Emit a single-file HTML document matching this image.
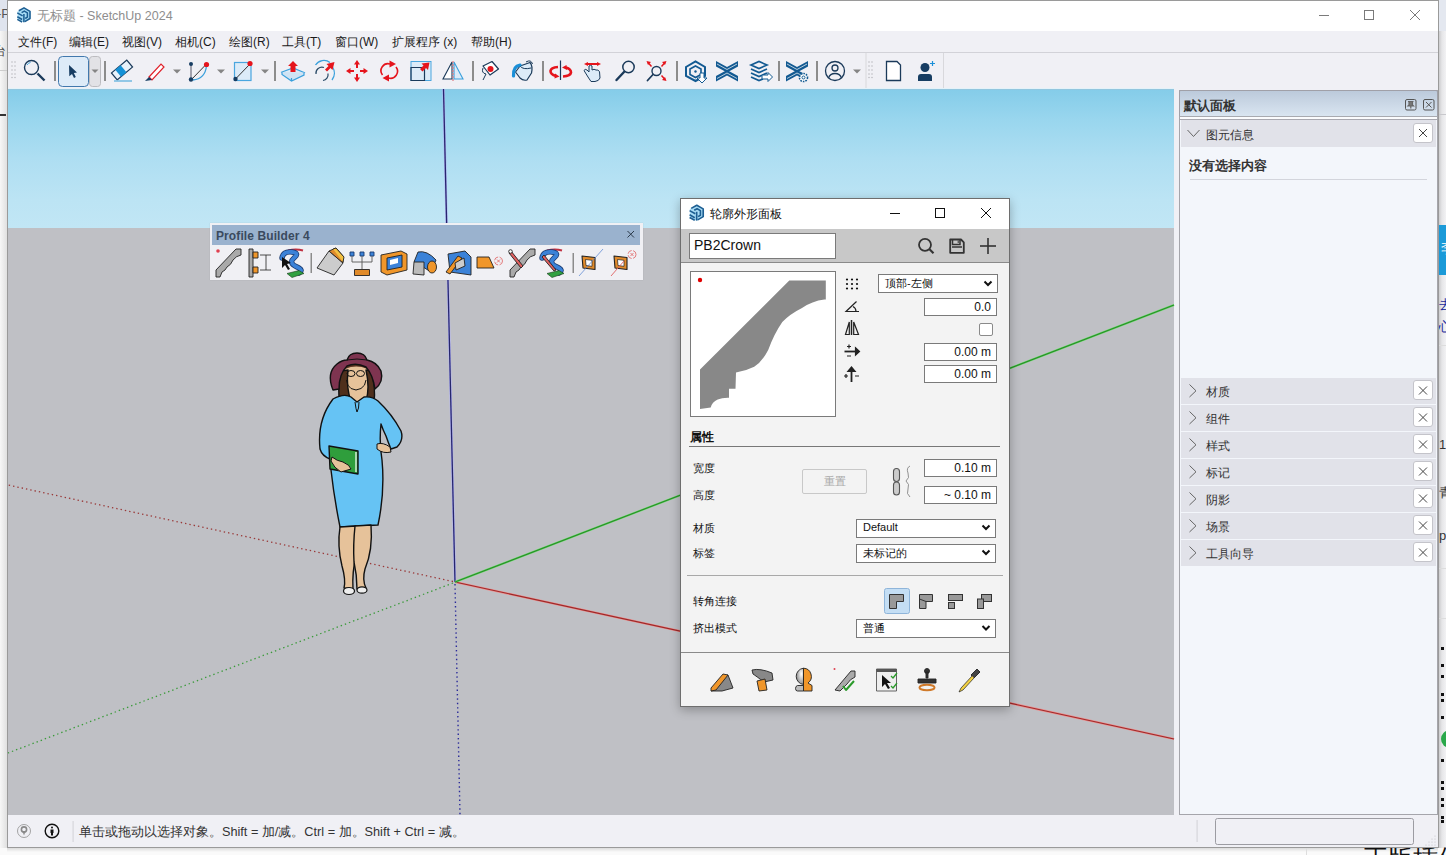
<!DOCTYPE html>
<html><head><meta charset="utf-8">
<style>
*{margin:0;padding:0;box-sizing:border-box}
html,body{width:1446px;height:855px;overflow:hidden;background:#f6f6f6;font-family:"Liberation Sans",sans-serif;position:relative}
.a{position:absolute}
svg{position:absolute;overflow:visible}
#win{left:7px;top:0;width:1432px;height:848px;border:1px solid #9a9a9a;background:#f0f0f5}
#title{left:8px;top:1px;width:1430px;height:30px;background:#fff}
#ttext{left:37px;top:8px;font-size:12.5px;color:#8e8e8e;white-space:nowrap}
#menu{left:8px;top:31px;width:1430px;height:21px;background:#f0f0f5}
.mi{position:absolute;top:34px;font-size:12px;color:#1a1a1a;white-space:nowrap}
#tbline{left:8px;top:52px;width:1430px;height:1px;background:#d2d2d8}
#tb{left:8px;top:53px;width:1430px;height:36px;background:#f0f0f5}
#sky{left:8px;top:89px;width:1166px;height:139px;background:linear-gradient(#84cce9 0%,#99d6ee 22%,#aedef2 50%,#bce4f4 80%,#c1e6f5 100%)}
#ground{left:8px;top:228px;width:1166px;height:587px;background:#bfc0c5}
#status{left:8px;top:815px;width:1430px;height:32px;background:#f0f0f5}
#panel{left:1179px;top:90px;width:259px;height:725px;background:#f3f6fb;border:1px solid #a5a5ab}
.dt{font-size:11px;color:#111;white-space:nowrap}
.inp{background:#fff;border:1px solid #7a7a7a;font-size:12px;color:#111;text-align:right;padding-right:5px;line-height:16px}
.prow{left:1181px;width:255px;height:26px;background:#e1e2e9}
.ptxt{left:1206px;font-size:12px;color:#333;white-space:nowrap}
.pbtn{left:1413px;width:20px;height:20px;background:#fff;border:1px solid #c4c4ca;border-radius:3px}
</style></head><body>
<div class="a" style="left:0;top:31px;width:7px;height:817px;background:linear-gradient(to right,#f7f7f7,#e0e0e0)"></div>
<div class="a" style="left:0;top:0;width:7px;height:31px;background:#dfe4ee"></div>
<div class="a" style="left:-3px;top:6px;font-size:13px;color:#555;white-space:nowrap">-P</div>
<div class="a" style="left:-6px;top:43px;font-size:12px;color:#444;white-space:nowrap">台</div>
<div class="a" style="left:0;top:70px;width:7px;height:1px;background:#ccc"></div>
<div class="a" style="left:0;top:114px;width:6px;height:2px;background:#333"></div>
<div class="a" style="left:1438px;top:0;width:8px;height:855px;background:linear-gradient(to right,#c4c4c6,#e6e6e8 50%,#f2f2f4)"></div>
<div class="a" style="left:1439px;top:0;width:7px;height:31px;background:#e4e8f0"></div>
<div class="a" style="left:1439px;top:114px;width:7px;height:1px;background:#c8c8cc"></div>
<div class="a" style="left:1439px;top:225px;width:7px;height:50px;background:#1b9ad8"></div>
<div class="a" style="left:1441px;top:240px;font-size:14px;color:#fff;white-space:nowrap">李</div>
<div class="a" style="left:1439px;top:296px;font-size:13px;color:#1a2a9a;white-space:nowrap">去</div>
<div class="a" style="left:1438px;top:318px;font-size:13px;color:#1a2a9a;white-space:nowrap">心</div>
<div class="a" style="left:1439px;top:345px;width:7px;height:1px;background:#ddd"></div>
<div class="a" style="left:1439px;top:437px;font-size:13px;color:#333;white-space:nowrap">1</div>
<div class="a" style="left:1439px;top:484px;font-size:13px;color:#333;white-space:nowrap">青</div>
<div class="a" style="left:1439px;top:528px;font-size:13px;color:#333;white-space:nowrap">p</div>
<div class="a" style="left:1439px;top:568px;width:7px;height:1px;background:#ddd"></div>
<div class="a" style="left:1439px;top:618px;width:7px;height:1px;background:#ddd"></div>
<svg style="left:1438px;top:640px" width="8" height="215" viewBox="1438 640 8 215">
 <g fill="#111"><rect x="1441" y="647" width="3" height="3"/><rect x="1441" y="664" width="3" height="3"/><rect x="1441" y="675" width="3" height="3"/><rect x="1441" y="693" width="3" height="3"/><rect x="1441" y="699" width="3" height="3"/><rect x="1441" y="716" width="3" height="3"/><rect x="1441" y="759" width="3" height="3"/><rect x="1441" y="781" width="3" height="3"/><rect x="1441" y="787" width="3" height="3"/><rect x="1441" y="798" width="3" height="3"/><rect x="1441" y="804" width="3" height="3"/><rect x="1441" y="816" width="3" height="3"/><rect x="1441" y="820" width="3" height="3"/></g>
 <circle cx="1450" cy="739" r="9" fill="#2aa84a"/>
</svg>
<div class="a" style="left:0;top:848px;width:1446px;height:7px;background:#fafafa"></div>
<div class="a" style="left:7px;top:848px;width:1431px;height:4px;background:linear-gradient(rgba(0,0,0,.12),rgba(0,0,0,0))"></div>
<div class="a" style="left:1306px;top:848px;width:1px;height:7px;background:#ddd"></div>
<div class="a" style="left:1363px;top:844px;font-size:25px;color:#111;white-space:nowrap;line-height:28px">正版插件</div>

<div class="a" id="win"></div>
<div class="a" id="title"></div>
<svg style="left:0;top:0" width="40" height="30" viewBox="0 0 40 30">
 <g id="sulogo">
 <path d="M17.5 11.5 L24 7.7 L30.5 11.3 L30.5 18.6 L24 22.3 L17.5 19 Z" fill="#a8dcf5"/>
 <g stroke="#1d5e92" stroke-width="1.55" fill="none" stroke-linejoin="round">
  <path d="M18.8 10.8 L24 7.9 L30 11.3 L30 18.5 L24.8 21.6"/>
  <path d="M21.6 12.6 L24.3 11.1 L27.4 12.9 L27.4 17.2 L25.2 18.5"/>
  <path d="M23.9 14 L23.9 22.2"/>
  <path d="M17.3 12.9 L22.6 15.9"/>
  <path d="M17.3 16.8 L22.1 19.5"/>
  <path d="M17.3 19.4 L22.1 22"/>
 </g>
 </g>
</svg>
<div class="a" id="ttext">无标题 - SketchUp 2024</div>
<svg style="left:1310px;top:0" width="120" height="30" viewBox="1310 0 120 30">
 <g stroke="#7a7a7a" stroke-width="1" fill="none">
  <line x1="1319" y1="15.5" x2="1329" y2="15.5"/>
  <rect x="1364.5" y="10.5" width="9" height="9"/>
  <line x1="1410" y1="10" x2="1420" y2="20"/><line x1="1420" y1="10" x2="1410" y2="20"/>
 </g>
</svg>
<div class="a" id="menu"></div>
<div class="mi" style="left:18px">文件(F)</div>
<div class="mi" style="left:69px">编辑(E)</div>
<div class="mi" style="left:122px">视图(V)</div>
<div class="mi" style="left:175px">相机(C)</div>
<div class="mi" style="left:229px">绘图(R)</div>
<div class="mi" style="left:282px">工具(T)</div>
<div class="mi" style="left:335px">窗口(W)</div>
<div class="mi" style="left:392px">扩展程序 (x)</div>
<div class="mi" style="left:471px">帮助(H)</div>
<div class="a" id="tbline"></div>
<div class="a" id="tb"></div>
<svg style="left:0;top:52px" width="960" height="37" viewBox="0 52 960 37">
 <g fill="#bcbcc2"><circle cx="12" cy="62" r=".8"/><circle cx="15" cy="62" r=".8"/><circle cx="12" cy="66" r=".8"/><circle cx="15" cy="66" r=".8"/><circle cx="12" cy="70" r=".8"/><circle cx="15" cy="70" r=".8"/><circle cx="12" cy="74" r=".8"/><circle cx="15" cy="74" r=".8"/><circle cx="12" cy="77.5" r=".8"/><circle cx="15" cy="77.5" r=".8"/></g>
 <!-- search -->
 <circle cx="31.5" cy="67.5" r="7" fill="none" stroke="#1b3a5a" stroke-width="1.4"/>
 <path d="M27 65 A5 5 0 0 1 30.5 62.5" stroke="#3fa4e0" stroke-width="1" fill="none"/>
 <line x1="37.5" y1="73.5" x2="44.5" y2="80.5" stroke="#1b3a5a" stroke-width="2.4"/>
 <g fill="#8c8c8c"><rect x="54" y="61" width="2" height="20"/><rect x="104" y="61" width="2" height="20"/><rect x="274" y="61" width="2" height="20"/><rect x="472" y="61" width="2" height="20"/><rect x="542" y="61" width="2" height="20"/><rect x="676" y="61" width="2" height="20"/><rect x="778" y="61" width="2" height="20"/><rect x="816" y="61" width="2" height="20"/></g>
 <!-- select -->
 <rect x="58.5" y="56.5" width="30" height="30" rx="4" fill="#ddebf8" stroke="#4178ad" stroke-width="1"/>
 <path d="M69 65 L77 72.5 L73.8 73 L75.8 77 L74 78 L72 74 L69.3 76.3 Z" fill="#173d62"/>
 <rect x="89.5" y="56.5" width="11" height="30" rx="3" fill="#e2e2e6" stroke="#bcbcc0"/>
 <g fill="#858585"><path d="M91.5 69.5 L98.5 69.5 L95 73 Z"/><path d="M173 69.5 L181 69.5 L177 73.5 Z"/><path d="M217 69.5 L225 69.5 L221 73.5 Z"/><path d="M261 69.5 L269 69.5 L265 73.5 Z"/><path d="M853 69.5 L861 69.5 L857 73.5 Z"/></g>
 <!-- eraser -->
 <g transform="rotate(-40 122 70)"><rect x="112" y="65.5" width="20" height="9" fill="#e8f2fb" stroke="#1b3a5a" stroke-width="1.2"/><rect x="117" y="65.5" width="7" height="9" fill="#1591d6"/></g>
 <line x1="114" y1="81" x2="132" y2="81" stroke="#7bbde3" stroke-width="1.6"/>
 <!-- pencil -->
 <path d="M149 77 L161 64 L164 67 L152 80 Z" fill="#fff" stroke="#e0202a" stroke-width="1.2"/>
 <path d="M145 81 L149 77 L152 80 Z" fill="#173d62"/>
 <!-- arc -->
 <line x1="191" y1="64" x2="191" y2="80" stroke="#556" stroke-width="1"/>
 <line x1="191" y1="80" x2="206" y2="64.5" stroke="#333" stroke-width="1"/>
 <path d="M193 80 Q205 79 206.5 66" stroke="#3aa0dc" stroke-width="1.3" fill="none"/>
 <circle cx="191" cy="64" r="2" fill="#173d62"/><circle cx="191" cy="79.5" r="2.2" fill="#173d62"/><circle cx="206.5" cy="64.5" r="2.6" fill="#e5141c"/>
 <!-- rect -->
 <rect x="234.5" y="62.5" width="16.5" height="18" fill="#dcebf8" stroke="#4aa6df" stroke-width="1.2"/>
 <line x1="235.5" y1="79" x2="250" y2="64" stroke="#333" stroke-width="1"/>
 <circle cx="235.5" cy="79" r="2.2" fill="#173d62"/><circle cx="250" cy="63.5" r="2.6" fill="#e5141c"/>
 <!-- push pull -->
 <path d="M282 72 L293 68 L304 72.5 L293 77.5 Z" fill="#dcebf8" stroke="#3aa0dc" stroke-width="1.2"/>
 <path d="M282 72 L282 74.5 L291.5 81 L304 75 L304 72.5 M291.5 81 L291.5 78" fill="#cfe3f4" stroke="#3aa0dc" stroke-width="1.2"/>
 <path d="M293 61 L298 66 L295.5 66 L295.5 72 L290.5 72 L290.5 66 L288 66 Z" fill="#e5141c"/>
 <!-- follow me -->
 <path d="M315.5 65 A10 10 0 0 1 330 62.5" stroke="#3aa0dc" stroke-width="1.3" fill="none"/>
 <path d="M332.5 67 A11 11 0 0 1 332 80" stroke="#3aa0dc" stroke-width="1.3" fill="none"/>
 <path d="M316 74 A6 6 0 0 1 324 67.5" stroke="#294a66" stroke-width="1.2" fill="none"/>
 <path d="M328 73.5 A6 6 0 0 1 323 80.5" stroke="#294a66" stroke-width="1.2" fill="none"/>
 <path d="M334.5 62 L332.5 70 L330.5 68 L327 71.5 L325 69.5 L328.5 66 L326.5 64 Z" fill="#e5141c"/>
 <!-- move -->
 <g fill="#e5141c"><path d="M357 60 L360 64.5 L354 64.5 Z"/><path d="M357 82 L360 77.5 L354 77.5 Z"/><path d="M346 71 L350.5 68 L350.5 74 Z"/><path d="M368 71 L363.5 68 L363.5 74 Z"/><rect x="356" y="64" width="2" height="4"/><rect x="356" y="74" width="2" height="4"/><rect x="350" y="70" width="4" height="2"/><rect x="360" y="70" width="4" height="2"/></g>
 <!-- rotate -->
 <path d="M382.5 75 A7 7 0 0 1 390 64" stroke="#e5141c" stroke-width="1.6" fill="none"/>
 <path d="M396 67 A7 7 0 0 1 388.5 78" stroke="#e5141c" stroke-width="1.6" fill="none"/>
 <path d="M389.5 60.5 L396 64 L389.5 67.5 Z" fill="#e5141c"/><path d="M389 74.5 L389 81.5 L382.5 78 Z" fill="#e5141c"/>
 <!-- scale -->
 <rect x="411" y="61.5" width="20" height="19" fill="#dcebf8" stroke="#4aa6df" stroke-width="1"/>
 <path d="M411 67.5 L424.5 67.5 L424.5 80.5 L411 80.5 Z" fill="none" stroke="#1b3a5a" stroke-width="1.2"/>
 <path d="M429.5 62.5 L428 70 L426 68 L422.5 71.5 L420 69 L423.5 65.5 L421.5 63.5 Z" fill="#e5141c"/>
 <!-- flip -->
 <path d="M452 62 L452 79 L443 79 Z" fill="#fff" stroke="#1b3a5a" stroke-width="1.1"/>
 <path d="M454 62 L454 79 L463 79 Z" fill="#dcebf8" stroke="#3aa0dc" stroke-width="1.1"/>
 <line x1="453" y1="61" x2="453" y2="81" stroke="#e07a80" stroke-width="1.2" stroke-dasharray="2 1"/>
 <!-- tape -->
 <path d="M483 66 L492 61.5 L498.5 69 L490 75 Z" fill="#fff" stroke="#1b3a5a" stroke-width="1.2" stroke-linejoin="round"/>
 <circle cx="490.5" cy="69" r="3" fill="#e5141c"/>
 <path d="M483 68 Q481 73 486 74 L483 80" stroke="#1b3a5a" stroke-width="1" fill="none"/>
 <!-- paint -->
 <path d="M520 66 L530 62.5 Q533 66 531.5 73 L527 80 Q523 81 520 78 L515.5 72 Z" fill="#dcebf8" stroke="#1b3a5a" stroke-width="1.2" stroke-linejoin="round"/>
 <path d="M520 66 Q523 70 531 68" stroke="#1b3a5a" stroke-width="1" fill="none"/>
 <path d="M526 62 Q531 59 532.5 64" stroke="#1b3a5a" stroke-width="1" fill="none"/>
 <path d="M520 65 Q513 66 513.5 76" stroke="#1a8fd8" stroke-width="3.2" fill="none" stroke-linecap="round"/>
 <!-- orbit -->
 <line x1="560.5" y1="60.5" x2="560.5" y2="80" stroke="#1b3a5a" stroke-width="1.2"/>
 <path d="M558 67 Q551 67.5 550.5 71 Q550.5 74.5 556 76" stroke="#e5141c" stroke-width="2.6" fill="none"/>
 <path d="M563 76.5 Q570.5 76 571 72.5 Q571 69 566 67.5" stroke="#e5141c" stroke-width="2.6" fill="none"/>
 <path d="M555 73.5 L559.5 76.5 L554.5 78.5 Z M566.5 65 L562 67.5 L567 70 Z" fill="#e5141c"/>
 <!-- pan -->
 <path d="M588 77 L584 70.5 Q585 68.5 587 70 L589 72 L589 66 Q590.5 64.5 592 66 L592 70 Q594 68.5 596 70 Q598 69.5 599.5 71.5 L600 78 Q599 81 595 81.5 L591 81.5 Z" fill="#dcebf8" stroke="#1b3a5a" stroke-width="1"/>
 <path d="M584 64 L588 62 L588 66 Z M601 64 L597 62 L597 66 Z" fill="#e5141c"/><rect x="587" y="63" width="11" height="2" fill="#e5141c"/>
 <!-- zoom -->
 <circle cx="628.5" cy="67" r="5.7" fill="none" stroke="#1b3a5a" stroke-width="1.5"/>
 <line x1="624" y1="72" x2="616.5" y2="80" stroke="#1b3a5a" stroke-width="2.4" stroke-linecap="round"/>
 <!-- zoom ext -->
 <circle cx="656.5" cy="71" r="4.5" fill="none" stroke="#1b3a5a" stroke-width="1.4"/>
 <line x1="653" y1="74.5" x2="647.5" y2="80.5" stroke="#1b3a5a" stroke-width="1.8" stroke-linecap="round"/>
 <g fill="#e5141c"><path d="M646.5 61 L651 62 L648 65 Z"/><path d="M666.5 61 L662 62 L665 65 Z"/><path d="M666.5 81 L662 80 L665 77 Z"/><line x1="648" y1="62.5" x2="651.5" y2="66.5" stroke="#e5141c" stroke-width="1.5"/><line x1="665" y1="62.5" x2="661.5" y2="66.5" stroke="#e5141c" stroke-width="1.5"/><line x1="665" y1="79.5" x2="661.5" y2="75.5" stroke="#e5141c" stroke-width="1.5"/></g>
 <!-- warehouse icons -->
 <g stroke="#135a92" fill="none" stroke-width="2">
  <path d="M686 67 L695.5 61.5 L705 67 L705 76 L695.5 81 L686 76 Z"/>
  <path d="M690 69 L695.5 66 L701 69 L701 74.5 L695.5 77.5 L690 74.5 Z" stroke-width="1.6"/>
 </g>
 <circle cx="695.5" cy="71.5" r="1.2" fill="#135a92"/>
 <path d="M700 73 L704 73 L704 78 L707 78 L702 83 L697 78 L700 78 Z" fill="#fff" stroke="#135a92" stroke-width="1"/>
 <g fill="#135a92">
  <path d="M716 61 L727 67 L738 61 L738 66.5 L727 72.5 L716 66.5 Z"/>
  <path d="M716 81.5 L727 75.5 L738 81.5 L738 76 L727 70 L716 76 Z"/>
  <path d="M717 64 L727 69.5 L737 64 M717 78.5 L727 73 L737 78.5" stroke="#fff" stroke-width=".7" fill="none"/>
 </g>
 <g stroke="#135a92" fill="none" stroke-width="1.7">
  <path d="M751 65 L759 61.5 L767 65 L759 68.5 Z"/><path d="M751 69 L759 72.5 L767 69"/><path d="M751 73 L759 76.5 L767 73"/><path d="M751 77 L759 80.5 L763 79"/>
 </g>
 <path d="M762 75 L768 75 L768 72.5 L772.5 77 L768 81.5 L768 79 L762 79 Z" fill="#fff" stroke="#135a92" stroke-width="1"/>
 <g fill="#135a92">
  <path d="M786 61 L797 67 L808 61 L808 66.5 L797 72.5 L786 66.5 Z"/>
  <path d="M786 81.5 L797 75.5 L801 77.5 L803 73 L797 70 L786 76 Z"/>
  <path d="M787 64 L797 69.5 L807 64 M787 78.5 L797 73 L800 74.5" stroke="#fff" stroke-width=".7" fill="none"/>
 </g>
 <circle cx="803.5" cy="77.5" r="4" fill="#fff" stroke="#135a92" stroke-width="1.6" stroke-dasharray="1.6 1"/>
 <circle cx="803.5" cy="77.5" r="1.5" fill="none" stroke="#135a92" stroke-width="1"/>
 <!-- account -->
 <circle cx="835" cy="71" r="9.5" fill="none" stroke="#1b3a5a" stroke-width="1.3"/>
 <circle cx="835" cy="68" r="3" fill="none" stroke="#1b3a5a" stroke-width="1.3"/>
 <path d="M828.5 78 Q830 73.5 835 73.5 Q840 73.5 841.5 78" fill="none" stroke="#1b3a5a" stroke-width="1.3"/>
 <rect x="865.5" y="53" width="1" height="36" fill="#d8d8dc"/>
 <rect x="943" y="53" width="1" height="36" fill="#d8d8dc"/>
 <g fill="#bcbcc2"><circle cx="869" cy="62" r=".8"/><circle cx="872" cy="62" r=".8"/><circle cx="869" cy="66" r=".8"/><circle cx="872" cy="66" r=".8"/><circle cx="869" cy="70" r=".8"/><circle cx="872" cy="70" r=".8"/><circle cx="869" cy="74" r=".8"/><circle cx="872" cy="74" r=".8"/><circle cx="869" cy="77.5" r=".8"/><circle cx="872" cy="77.5" r=".8"/></g>
 <path d="M886.5 61.5 L897 61.5 L900.5 65 L900.5 80.5 L886.5 80.5 Z" fill="#fff" stroke="#1b3a5a" stroke-width="1.3"/>
 <circle cx="925" cy="67.5" r="4.5" fill="#173d62"/>
 <path d="M918 81 L918 77 Q918 74 921 74 L929 74 Q932 74 932 77 L932 81 Z" fill="#173d62"/>
 <path d="M932.5 61 L932.5 66 M930 63.5 L935 63.5" stroke="#1a8fd8" stroke-width="1.2"/>
</svg>

<div class="a" id="sky"></div>
<div class="a" style="left:8px;top:88px;width:1166px;height:1px;background:#e4f2f9"></div>
<div class="a" style="left:8px;top:89px;width:1166px;height:1px;background:#92c6de"></div>
<div class="a" id="ground"></div>
<svg style="left:8px;top:89px" width="1166" height="726" viewBox="8 89 1166 726">
 <line x1="455" y1="582" x2="443.5" y2="89" stroke="#b4b4f4" stroke-width="2.4"/>
 <line x1="455" y1="582" x2="443.5" y2="89" stroke="#26266e" stroke-width="1.3"/>
 <line x1="455" y1="584" x2="460" y2="815" stroke="#2a2a9a" stroke-width="1.4" stroke-dasharray="1.4 3"/>
 <line x1="455" y1="582" x2="1174" y2="739" stroke="#f08a8a" stroke-width="2.2"/>
 <line x1="455" y1="582" x2="1174" y2="739" stroke="#9a2a2a" stroke-width="1.2"/>
 <line x1="453" y1="581.5" x2="8" y2="485" stroke="#9a3a3a" stroke-width="1.3" stroke-dasharray="1.4 3"/>
 <line x1="455" y1="582" x2="1174" y2="305" stroke="#66e066" stroke-width="2"/>
 <line x1="455" y1="582" x2="1174" y2="305" stroke="#2a8a2a" stroke-width="1.1"/>
 <line x1="453" y1="583" x2="8" y2="753" stroke="#3a9a3a" stroke-width="1.3" stroke-dasharray="1.4 3"/>
 <!-- woman -->
 <g stroke="#111" stroke-width="1.4" stroke-linejoin="round">
  <path d="M345 365 L346 399 Q356 404 368 399 L369 365 Z" fill="#e6c29a" stroke="none"/>
  <path d="M341 371 Q337 389 340 403 L351 401 Q346 388 348 370 Z" fill="#4f2f1c"/>
  <path d="M366 370 Q370 388 366 401 L374 403 Q376 388 371 371 Z" fill="#4f2f1c"/>
  
  <path d="M346.5 380 Q347 386 351 388.5 Q356 391.5 361 388.5 Q365.5 386 366 380" fill="none" stroke-width="1"/>
  <path d="M345 367.5 Q356 362.5 368 367.5" fill="none" stroke="#5a3420" stroke-width="3"/>
  <path d="M333 390 Q326 373 337 364 Q342 360 347 360 Q349 353 357 353 Q365 353 367 360 Q377 362 381 371 Q384 382 375 389 Q373 375 366 367 Q356 362 347 366 Q339 374 339 389 Z" fill="#7e3450"/>
  <path d="M347 360 Q357 358 367 360" fill="none" stroke-width="1"/>
  <path d="M333 399 Q344 393 351 397 L357 402 L364 397 Q372 396 378 401 Q392 414 401 431 Q404 440 397 447 L391 449 Q388 442 386 436 Q383 430 381 424 Q379 442 382 460 Q385 492 378 525 L340 527 Q334 497 331 470 L330 459 Q322 456 320 449 Q317 420 333 399 Z" fill="#66c3f4"/>
  <path d="M355 402 Q356 410 357 412 Q359 409 359 402" fill="none" stroke-width="1"/>
  <path d="M377 444 Q383 442 390 447 L391 452 Q383 454 377 449 Z" fill="#e6c29a" stroke-width="1"/>
  <path d="M329 446 L358 451 L358 474 L330 469 Z" fill="#2f9e3c"/>
  <line x1="356" y1="452" x2="356" y2="472" stroke="#fff" stroke-width="1.2"/>
  <path d="M332 457 Q337 461 343 462 Q350 465 351 469 L341 472 Q334 468 331 461 Z" fill="#e6c29a" stroke-width="1"/>
  <path d="M340 527 Q337 546 342 566 Q346 580 344 588 L353 589 Q352 572 356 556 Q357 540 356 526 Z" fill="#e6c29a"/>
  <path d="M355 526 L371 525 Q373 550 365 569 Q362 580 366 588 L357 589 Q357 575 354 562 Q353 545 355 526 Z" fill="#e6c29a"/>
  <ellipse cx="349" cy="591" rx="5.5" ry="3.5" fill="#eee" stroke-width="1.2"/>
  <ellipse cx="362" cy="590" rx="5" ry="3.2" fill="#eee" stroke-width="1.2"/>
 </g>
 <g fill="none" stroke="#111" stroke-width="1"><ellipse cx="351" cy="373.5" rx="4" ry="3"/><ellipse cx="360.5" cy="373.5" rx="4" ry="3"/></g>
</svg>

<div class="a" style="left:210px;top:223px;width:433px;height:57px;background:#f0f0f4;box-shadow:0 0 1px rgba(0,0,0,.15)"></div>
<div class="a" style="left:212px;top:225px;width:428px;height:20px;background:#9ab2ce"></div>
<div class="a" style="left:216px;top:229px;font-size:12px;font-weight:bold;color:#3a4a5e;white-space:nowrap;letter-spacing:0.1px">Profile Builder 4</div>
<svg style="left:210px;top:223px" width="433" height="57" viewBox="210 223 433 57">
 <path d="M627.5 231 L634 237.5 M634 231 L627.5 237.5" stroke="#2c3a4a" stroke-width="1"/>
 <g stroke="#222" stroke-width="0.9" stroke-linejoin="round">
 <circle cx="218" cy="251" r="1.8" fill="#e04050" stroke="none"/>
 <path d="M216 270 L236 249 L241 249 L241 255 Q236 256 233 260 Q231 265 227 267 L225 270 L222 272 L220 277 L216 277 Z" fill="#aaa"/>
 <rect x="249" y="249" width="4" height="28" fill="#aaa"/>
 <rect x="253" y="252" width="5" height="6" fill="#f0962a"/><rect x="253" y="267" width="5" height="6" fill="#f0962a"/>
 <path d="M260 255 L271 255 M260 270 L271 270 M266 255 L266 270" stroke-width="0.8"/>
 <path d="M288 250.5 Q296 248.5 303 250.5" stroke="#c03040" stroke-width="2" fill="none"/>
 <path d="M282 258 Q283 251 292 252 Q300 253 294 258 Q288 263 297 267 Q304 270 299 273" stroke="#1a3a70" stroke-width="5.4" fill="none" stroke-linecap="round"/>
 <path d="M282 258 Q283 251 292 252 Q300 253 294 258 Q288 263 297 267 Q304 270 299 273" stroke="#3b82d8" stroke-width="3.8" fill="none" stroke-linecap="round"/>
 <path d="M287 273.5 L299 270.5 L304 273.5 L292 277.5 Z" fill="#30a040" stroke="#1a3a1a" stroke-width=".6"/>
 <path d="M282 257 L282 268 L285 265 L288 270 L290 269 L287 264 L291 263 Z" fill="#111" stroke="none"/>
 </g>
 <g fill="#8c8c8c"><rect x="310.5" y="253" width="1.5" height="20"/><rect x="572.5" y="253" width="1.5" height="20"/></g>
 <g stroke="#222" stroke-width="0.9" stroke-linejoin="round">
 <path d="M317 268 L329 251 L343 263 L334 275 Z" fill="#ccc"/>
 <path d="M329 251 L336 248 L343 256 L343 263 Z" fill="#e08a2a"/>
 <path d="M333 249 L336 248 L344 257 L343 262" fill="#f2c040"/>
 <rect x="350" y="252" width="4" height="4" fill="#3b82d8" stroke="#1a3a70"/><rect x="360" y="252" width="4" height="4" fill="#3b82d8" stroke="#1a3a70"/><rect x="370" y="252" width="4" height="4" fill="#3b82d8" stroke="#1a3a70"/>
 <path d="M352 256 L352 262 L372 262 L372 256 M362 256 L362 269" fill="none" stroke="#555"/>
 <rect x="354.5" y="269.5" width="15" height="6" fill="#e08a2a"/>
 <path d="M381 255 L401 251 L407 254 L407 270 L387 275 L381 272 Z" fill="#f0962a"/>
 <path d="M387 258 L402 255 L402 267 L387 270 Z" fill="#3b82d8"/>
 <path d="M390 260 L398 258 L398 263 L390 265 Z" fill="#fff" stroke="none"/>
 <path d="M418 252 Q427 250 436 260 L431 272 Q422 266 414 262 Z" fill="#3b82d8"/>
 <ellipse cx="432" cy="267" rx="4.5" ry="6" fill="#f0962a"/>
 <path d="M414 262 L424 262 L424 275 L413 274 Z" fill="#bbb"/>
 <path d="M448 254 L465 251 L471 257 L471 275 L450 272 Z" fill="#3b82d8"/>
 <path d="M446 272 L458 256 L462 258 L450 274 Z" fill="#f0962a"/>
 <path d="M455 263 L464 258 L465 266 L456 270 Z" fill="#ccc"/>
 <path d="M477 257 L489 257 L494 268 L477 268 Z" fill="#f0962a"/>
 <circle cx="498.5" cy="261" r="4" fill="none" stroke="#e06060" stroke-width="0.8" stroke-dasharray="5 1.5"/>
 <path d="M497 259.5 L500 262.5 M500 259.5 L497 262.5" stroke="#e06060" stroke-width="0.8"/>
 <path d="M510 270 L530 249 L535 249 L535 255 Q530 256 527 260 Q525 265 521 267 L519 270 L516 272 L514 277 L510 277 Z" fill="#aaa"/>
 <path d="M511 251 L523 266 L521 268 L509 253 Z" fill="#e06060"/>
 <circle cx="510.5" cy="251.5" r="1.8" fill="#fff"/>
 <path d="M547 250.5 Q555 248.5 562 250.5" stroke="#c03040" stroke-width="2" fill="none"/>
 <path d="M542 258 Q543 251 552 252 Q560 253 554 258 Q548 263 557 267 Q564 270 559 273" stroke="#1a3a70" stroke-width="5.4" fill="none" stroke-linecap="round"/>
 <path d="M542 258 Q543 251 552 252 Q560 253 554 258 Q548 263 557 267 Q564 270 559 273" stroke="#3b82d8" stroke-width="3.8" fill="none" stroke-linecap="round"/>
 <path d="M547 273.5 L559 270.5 L564 273.5 L552 277.5 Z" fill="#30a040" stroke="#1a3a1a" stroke-width=".6"/>
 <path d="M544 255 L556 270 L554 271 L542 257 Z" fill="#e06060"/>
 <path d="M582 256 L595 257.5 L595 269.5 L583 268 Z" fill="#e08a2a" stroke-width="1.1"/>
 <path d="M585.5 259.5 L592 260.3 L592 266.3 L586 265.5 Z" fill="#fff" stroke-width="0.7"/>
 <path d="M614 256 L627 257.5 L627 269.5 L615 268 Z" fill="#e08a2a" stroke-width="1.1"/>
 <path d="M617.5 259.5 L624 260.3 L624 266.3 L618 265.5 Z" fill="#fff" stroke-width="0.7"/>
 </g>
 <line x1="579" y1="276" x2="603" y2="249" stroke="#5080d0" stroke-width="0.7"/>
 <line x1="611" y1="276" x2="624" y2="261" stroke="#e06060" stroke-width="0.9"/>
 <circle cx="632" cy="254.5" r="4" fill="none" stroke="#e06060" stroke-width="0.8" stroke-dasharray="5 1.5"/>
 <path d="M630.5 253 L633.5 256 M633.5 253 L630.5 256" stroke="#e06060" stroke-width="0.8"/>
</svg>

<!--VIEWPORT-->
<div class="a" id="status"></div>
<svg style="left:8px;top:815px" width="1430" height="32" viewBox="8 815 1430 32">
 <circle cx="24" cy="831" r="6.5" fill="none" stroke="#9a9a9a" stroke-width=".9"/>
 <circle cx="24" cy="829.5" r="2.6" fill="none" stroke="#8a8a8a" stroke-width="1.6"/>
 <path d="M22.3 831 L24 835.5 L25.7 831 Z" fill="#8a8a8a"/>
 <circle cx="52" cy="831" r="6.8" fill="none" stroke="#111" stroke-width="1.4"/>
 <circle cx="52" cy="827.5" r="1" fill="#111"/>
 <path d="M50.5 829.5 L53.5 829.5 L53.5 833 L53 833 L53 835.5 L51 835.5 L51 833 L50.5 833 Z" fill="#111"/>
 <rect x="72.5" y="821" width="1.2" height="21" fill="#d6d6dc"/>
 <rect x="1196.5" y="820" width="1.2" height="22" fill="#d6d6dc"/>
 <rect x="1215.5" y="818.5" width="198" height="26" rx="2" fill="#f0f0f5" stroke="#9c9ca2"/>
 <g fill="#c0c0c6"><circle cx="1435" cy="845" r=".6"/><circle cx="1432" cy="845" r=".6"/><circle cx="1429" cy="845" r=".6"/><circle cx="1426" cy="845" r=".6"/><circle cx="1435" cy="842" r=".6"/><circle cx="1432" cy="842" r=".6"/><circle cx="1429" cy="842" r=".6"/><circle cx="1435" cy="839" r=".6"/><circle cx="1432" cy="839" r=".6"/><circle cx="1435" cy="836" r=".6"/></g>
</svg>
<div class="a" style="left:79px;top:824px;font-size:12.7px;color:#333;white-space:nowrap">单击或拖动以选择对象。Shift = 加/减。Ctrl = 加。Shift + Ctrl = 减。</div>

<!--STATUS2-->
<div class="a" id="panel"></div>
<div class="a" style="left:1179px;top:90px;width:259px;height:27px;background:linear-gradient(#bccadb,#d9e5f1);border:1px solid #a0a0a8;border-bottom:1px solid #a8aab0;border-radius:2px 2px 0 0"></div>
<div class="a" style="left:1184px;top:97px;font-size:13px;font-weight:bold;color:#333;white-space:nowrap">默认面板</div>
<svg style="left:1400px;top:95px" width="40" height="20" viewBox="1400 95 40 20">
 <rect x="1405.5" y="99.5" width="10.5" height="10.5" rx="1.5" fill="none" stroke="#555" stroke-width="1"/>
 <path d="M1408 101.5 L1413.5 101.5 M1409 102 L1409 105 L1408 106 L1413.5 106 L1412.5 105 L1412.5 102 M1410.8 106 L1410.8 108.5" stroke="#666" stroke-width="1.2" fill="#777"/>
 <rect x="1423.5" y="99.5" width="10.5" height="10.5" rx="1.5" fill="none" stroke="#555" stroke-width="1"/>
 <path d="M1426 102 L1431.5 107.5 M1431.5 102 L1426 107.5" stroke="#555" stroke-width="1"/>
</svg>
<div class="a" style="left:1180px;top:117px;width:257px;height:2px;background:#fbfcfe"></div>
<div class="a" style="left:1180px;top:119px;width:257px;height:1px;background:#a8a8b0"></div>
<div class="a prow" style="top:120px;height:27px"></div>
<div class="a ptxt" style="top:127px">图元信息</div>
<div class="a pbtn" style="top:123px"></div>
<div class="a" style="left:1189px;top:157px;font-size:13px;font-weight:bold;color:#333;white-space:nowrap">没有选择内容</div>
<div class="a" style="left:1190px;top:179px;width:237px;height:1px;background:#d3d5dc"></div>
<div class="a prow" style="top:378px"></div><div class="a ptxt" style="top:384px">材质</div><div class="a pbtn" style="top:380px"></div>
<div class="a prow" style="top:405px"></div><div class="a ptxt" style="top:411px">组件</div><div class="a pbtn" style="top:407px"></div>
<div class="a prow" style="top:432px"></div><div class="a ptxt" style="top:438px">样式</div><div class="a pbtn" style="top:434px"></div>
<div class="a prow" style="top:459px"></div><div class="a ptxt" style="top:465px">标记</div><div class="a pbtn" style="top:461px"></div>
<div class="a prow" style="top:486px"></div><div class="a ptxt" style="top:492px">阴影</div><div class="a pbtn" style="top:488px"></div>
<div class="a prow" style="top:513px"></div><div class="a ptxt" style="top:519px">场景</div><div class="a pbtn" style="top:515px"></div>
<div class="a prow" style="top:540px"></div><div class="a ptxt" style="top:546px">工具向导</div><div class="a pbtn" style="top:542px"></div>
<svg style="left:1180px;top:120px" width="258" height="450" viewBox="1180 120 258 450">
 <g stroke="#666" stroke-width="1" fill="none">
  <path d="M1187.5 130 L1193.5 136.5 L1199.5 130"/>
  <path d="M1189.5 384.5 L1196 390.8 L1189.5 397"/>
  <path d="M1189.5 411.5 L1196 417.8 L1189.5 424"/>
  <path d="M1189.5 438.5 L1196 444.8 L1189.5 451"/>
  <path d="M1189.5 465.5 L1196 471.8 L1189.5 478"/>
  <path d="M1189.5 492.5 L1196 498.8 L1189.5 505"/>
  <path d="M1189.5 519.5 L1196 525.8 L1189.5 532"/>
  <path d="M1189.5 546.5 L1196 552.8 L1189.5 559"/>
 </g>
 <g stroke="#444" stroke-width="1">
  <path d="M1419 129 L1427 137 M1427 129 L1419 137"/>
  <path d="M1419 386.5 L1427 394.5 M1427 386.5 L1419 394.5"/>
  <path d="M1419 413.5 L1427 421.5 M1427 413.5 L1419 421.5"/>
  <path d="M1419 440.5 L1427 448.5 M1427 440.5 L1419 448.5"/>
  <path d="M1419 467.5 L1427 475.5 M1427 467.5 L1419 475.5"/>
  <path d="M1419 494.5 L1427 502.5 M1427 494.5 L1419 502.5"/>
  <path d="M1419 521.5 L1427 529.5 M1427 521.5 L1419 529.5"/>
  <path d="M1419 548.5 L1427 556.5 M1427 548.5 L1419 556.5"/>
 </g>
</svg>

<!--PANEL2-->
<div class="a" style="left:680px;top:198px;width:330px;height:509px;background:#f3f3f3;border:1px solid #6e6e6e;box-shadow:0 3px 10px rgba(0,0,0,.28)"></div>
<div class="a" style="left:681px;top:199px;width:328px;height:30px;background:#fff"></div>
<div class="a" style="left:681px;top:229px;width:328px;height:34px;background:#c8c8c8;border-bottom:1px solid #8a8a8a"></div>
<div class="a" style="left:689px;top:233px;width:147px;height:26px;background:#fff;border:1px solid #7a7a7a"></div>
<div class="a" style="left:694px;top:237px;font-size:14px;color:#111;white-space:nowrap">PB2Crown</div>
<div class="a" style="left:710px;top:206px;font-size:12px;color:#111;white-space:nowrap">轮廓外形面板</div>
<div class="a" style="left:690px;top:271px;width:146px;height:146px;background:#fff;border:1px solid #7a7a7a"></div>

<div class="a" style="left:878px;top:274px;width:120px;height:19px;background:#fff;border:1px solid #7a7a7a"></div>
<div class="a dt" style="left:885px;top:276px">顶部-左侧</div>
<div class="a inp" style="left:924px;top:298px;width:73px;height:18px">0.0</div>
<div class="a" style="left:979px;top:323px;width:14px;height:13px;background:#fff;border:1px solid #8a8a8a;border-radius:2px"></div>
<div class="a inp" style="left:924px;top:343px;width:73px;height:18px">0.00 m</div>
<div class="a inp" style="left:924px;top:365px;width:73px;height:18px">0.00 m</div>
<div class="a" style="left:690px;top:429px;font-size:12px;font-weight:bold;color:#111;white-space:nowrap">属性</div>
<div class="a" style="left:689px;top:446px;width:311px;height:1px;background:#777"></div>
<div class="a dt" style="left:693px;top:461px">宽度</div>
<div class="a dt" style="left:693px;top:488px">高度</div>
<div class="a" style="left:802px;top:469px;width:65px;height:25px;border:1px solid #c8c8c8;border-radius:2px;font-size:11px;color:#a8a8a8;text-align:center;line-height:23px">重置</div>
<div class="a inp" style="left:924px;top:459px;width:73px;height:18px">0.10 m</div>
<div class="a inp" style="left:924px;top:486px;width:73px;height:18px">~ 0.10 m</div>
<div class="a dt" style="left:693px;top:521px">材质</div>
<div class="a" style="left:856px;top:519px;width:140px;height:19px;background:#fff;border:1px solid #7a7a7a"></div>
<div class="a dt" style="left:863px;top:521px">Default</div>
<div class="a dt" style="left:693px;top:546px">标签</div>
<div class="a" style="left:856px;top:544px;width:140px;height:19px;background:#fff;border:1px solid #7a7a7a"></div>
<div class="a dt" style="left:863px;top:546px">未标记的</div>
<div class="a" style="left:687px;top:575px;width:316px;height:1px;background:#a8a8a8"></div>
<div class="a dt" style="left:693px;top:594px">转角连接</div>
<div class="a dt" style="left:693px;top:621px">挤出模式</div>
<div class="a" style="left:856px;top:619px;width:140px;height:19px;background:#fff;border:1px solid #7a7a7a"></div>
<div class="a dt" style="left:863px;top:621px">普通</div>
<div class="a" style="left:681px;top:652px;width:328px;height:1px;background:#8a8a8a"></div>

<svg style="left:680px;top:198px" width="330" height="509" viewBox="680 198 330 509">
 <defs><radialGradient id="sph" cx="0.7" cy="0.35" r="0.8"><stop offset="0" stop-color="#fff"/><stop offset="1" stop-color="#777"/></radialGradient></defs>
 <circle cx="834.5" cy="669" r="1" fill="#e04050"/>
 <g transform="translate(671.1 196.8) scale(1.07)"><path d="M17.5 11.5 L24 7.7 L30.5 11.3 L30.5 18.6 L24 22.3 L17.5 19 Z" fill="#a8dcf5"/>
 <g stroke="#1d5e92" stroke-width="1.55" fill="none" stroke-linejoin="round">
  <path d="M18.8 10.8 L24 7.9 L30 11.3 L30 18.5 L24.8 21.6"/>
  <path d="M21.6 12.6 L24.3 11.1 L27.4 12.9 L27.4 17.2 L25.2 18.5"/>
  <path d="M23.9 14 L23.9 22.2"/>
  <path d="M17.3 12.9 L22.6 15.9"/>
  <path d="M17.3 16.8 L22.1 19.5"/>
  <path d="M17.3 19.4 L22.1 22"/>
 </g></g>
 <g stroke="#111" stroke-width="1" fill="none">
  <line x1="890" y1="213.5" x2="900" y2="213.5"/>
  <rect x="935.5" y="208.5" width="9" height="9"/>
  <line x1="981" y1="208" x2="991" y2="218"/><line x1="991" y1="208" x2="981" y2="218"/>
 </g>
 <g stroke="#333" fill="none">
  <circle cx="925" cy="244.8" r="6" stroke-width="1.8"/>
  <line x1="929.5" y1="249.3" x2="933.5" y2="253.3" stroke-width="2.2"/>
  <path d="M950.2 239.5 L961 239.5 L963.8 242.3 L963.8 252.8 L950.2 252.8 Z" stroke-width="1.8" stroke-linejoin="round"/>
  <path d="M952.5 240 L952.5 244.5 L960 244.5 L960 240" stroke-width="1.5"/>
  <line x1="958.2" y1="240.5" x2="958.2" y2="243" stroke-width="1"/>
  <line x1="952" y1="247" x2="962" y2="247" stroke-width="1.5"/>
  <line x1="980" y1="246" x2="996" y2="246" stroke-width="1.6"/>
  <line x1="988" y1="238" x2="988" y2="254" stroke-width="1.6"/>
 </g>
 <circle cx="700" cy="280" r="2.2" fill="#e00000"/>
 <path d="M789.3 280.4 L825.8 280.4 L825.8 299.5 L824.4 299.5 Q812 301 802 308 Q790 314 782.3 322 Q774 334 768.2 350 Q762 362 754.2 366.8 Q746 371 736 372.4 L735.5 388.7 L729 388.7 L729 397.7 Q722 397.5 717.7 399.5 Q712 402 710.7 407.5 L700 408.9 L700 369.6 Z" fill="#888"/>
 <g fill="#111">
  <circle cx="847" cy="279.5" r="1.1"/><circle cx="852" cy="279.5" r="1.1"/><circle cx="857" cy="279.5" r="1.1"/>
  <circle cx="847" cy="284" r="1.1"/><circle cx="852" cy="284" r="1.1"/><circle cx="857" cy="284" r="1.1"/>
  <circle cx="847" cy="288.5" r="1.1"/><circle cx="852" cy="288.5" r="1.1"/><circle cx="857" cy="288.5" r="1.1"/>
 </g>
 <g stroke="#222" fill="none" stroke-width="1.2">
  <path d="M856.5 301.5 L846 311.5 L859 311.5"/><path d="M853 306.5 Q856 308 856 311.5"/>
  <path d="M851.5 320 L851.5 335" stroke-width="1.5"/><path d="M849.3 322 L845.5 334.5 L849.3 334.5 Z M853.7 322 L858.5 334.5 L853.7 334.5 Z"/>
  <line x1="844.5" y1="351.5" x2="857" y2="351.5" stroke-width="1.8"/><path d="M855.5 347.8 L859.5 351.5 L855.5 355.2 Z" fill="#222"/>
  <path d="M849 344.5 L849 348.5 M847 346.5 L851 346.5 M847 356 L851 356" stroke-width="1.2"/>
  <line x1="851.5" y1="369" x2="851.5" y2="382" stroke-width="1.8"/><path d="M847.8 371.5 L851.5 367 L855.2 371.5 Z" fill="#222"/>
  <path d="M844 376 L848 376 M846 374 L846 378 M855 376 L859 376" stroke-width="1.2"/>
 </g>
 <g stroke="#111" stroke-width="2" fill="none">
  <path d="M984.5 281.5 L988 285 L991.5 281.5"/>
  <path d="M982.5 525.5 L986 529 L989.5 525.5"/>
  <path d="M982.5 550.5 L986 554 L989.5 550.5"/>
  <path d="M982.5 626 L986 629.5 L989.5 626"/>
 </g>
 <g stroke="#555" fill="#ccc" stroke-width="1.1">
  <rect x="893.5" y="468.5" width="6" height="13" rx="3"/><rect x="893.5" y="482" width="6" height="13" rx="3"/>
 </g>
 <path d="M910 466 Q906 468 908 473 Q910 478 906 481 Q910 484 908 489 Q906 494 910 497" stroke="#777" fill="none" stroke-width=".8"/>
 <rect x="884.5" y="588.5" width="25" height="25" rx="2" fill="#c4def4" stroke="#8fb5da"/>
 <g fill="#999" stroke="#333" stroke-width="1">
  <path d="M889.5 594.5 L903.5 594.5 L903.5 601.5 L896.5 601.5 L896.5 608.5 L889.5 608.5 Z"/>
  <path d="M919.5 594.5 L932.5 594.5 L932.5 601.5 L926 601.5 L926 608.5 L919.5 608.5 L919.5 599 Z M919.5 599 L926 601.5"/>
  <rect x="948.5" y="594.5" width="14" height="6"/><rect x="948.5" y="602.5" width="6" height="6"/>
  <rect x="981.5" y="594.5" width="10" height="7"/><rect x="977.5" y="599" width="6" height="9.5"/>
 </g>
 <g stroke="#222" stroke-width="0.9" stroke-linejoin="round">
  <path d="M711 691 L724 676 L728 675 L733 688 L722 691 Z" fill="#888"/>
  <path d="M711 691 L711 688 L723 674 L728 675 L716 690 Z" fill="#f0962a"/>
  <path d="M752 670 Q760 668 772 673 L773 680 L764 682 Q756 676 753 674 Z" fill="#888"/>
  <path d="M757 681 L765 679 L767 690 L759 691 Z" fill="#f0962a"/>
  <path d="M803.5 684.5 A8.2 8.2 0 0 1 803.5 668.2 Z" fill="url(#sph)"/>
  <path d="M803.5 668.2 A8.2 8.2 0 0 1 808 683 L812 685.5 L812 691 L803.5 691 Z" fill="#f0962a"/>
  <path d="M803.5 685.5 L797.5 685.5 Q795.5 686 795.5 688.5 Q795.5 691 797.5 691 L803.5 691 Z" fill="#bbb"/>
  <path d="M835 690 L851 671 L855 671 L855 677 Q850 679 847 684 L840 691 Z" fill="#aaa"/>
  <path d="M843 686 L846 690 L854 681" stroke="#2a9a2a" stroke-width="2" fill="none"/>
  <rect x="876.5" y="669" width="20" height="22" fill="#eee" stroke="#555"/>
  <rect x="876.5" y="669" width="20" height="3" fill="#555" stroke="none"/>
  <path d="M882 675 L882 687 L885 684 L888 689 L890 688 L887 683 L891 683 Z" fill="#111" stroke="none"/>
  <path d="M891 676 L893 678 L897 673 M891 686 L893 688 L897 683" stroke="#2a9a2a" stroke-width="1.3" fill="none"/>
  <circle cx="927" cy="671" r="2.5" fill="#333"/><rect x="926" y="672" width="2" height="6" fill="#333"/>
  <path d="M918 679 L936 679 L936 683 L918 683 Z" fill="#333"/>
  <ellipse cx="927" cy="687.5" rx="7.5" ry="2.8" fill="none" stroke="#d07a2a" stroke-width="2"/>
  <path d="M977 669 L980 672 L974 678 L971 675 Z" fill="#444"/>
  <path d="M972 676 L961 688 L959 692 L963 690 L974 678" fill="#f2d040" stroke-width=".7"/>
 </g>
</svg>
<!--DIALOG2-->
</body></html>
